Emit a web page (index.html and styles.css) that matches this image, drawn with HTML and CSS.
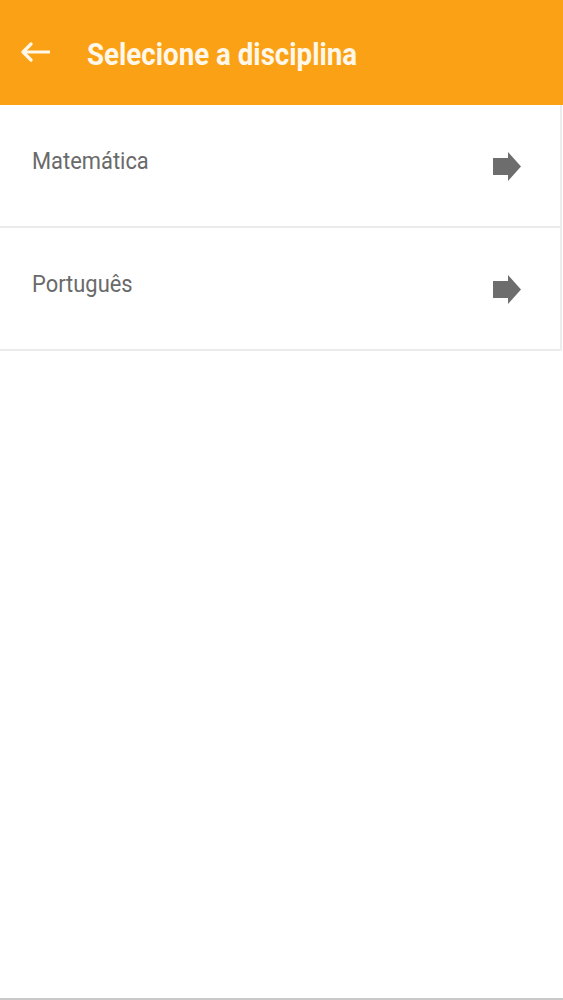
FILE: index.html
```html
<!DOCTYPE html>
<html lang="pt">
<head>
  <meta charset="UTF-8">
  <meta name="viewport" content="width=device-width, initial-scale=1.0">
  <title>Selecione a disciplina</title>
  <link rel="stylesheet" href="styles.css">
</head>
<body>
  <div class="screen">
    <div class="toolbar">
      <span class="back">
        <svg width="30" height="20" viewBox="0 0 30 20">
          <path d="M29 10H3M11 2L3 10l8 8" fill="none" stroke="#fff8ea" stroke-width="3.2" stroke-linecap="round" stroke-linejoin="round"/>
        </svg>
      </span>
      <span class="title">Selecione a disciplina</span>
    </div>

    <div class="list">
      <div class="item">
        <span class="item-text">Matemática</span>
        <svg class="go" width="28" height="29" viewBox="0 0 28 29">
          <path d="M0 6h15V0l13 14.5L15 29v-6H0z" fill="#6d6d6d"/>
        </svg>
      </div>
      <div class="item">
        <span class="item-text">Português</span>
        <svg class="go" width="28" height="29" viewBox="0 0 28 29">
          <path d="M0 6h15V0l13 14.5L15 29v-6H0z" fill="#6d6d6d"/>
        </svg>
      </div>
    </div>

    <div class="spacer"></div>
    <div class="bottom-line"></div>
  </div>
</body>
</html>
```

FILE: styles.css
```css
body {
  margin: 0;
  padding: 0;
  background-color: white;
  font-family: Roboto, "Liberation Sans", Arial, sans-serif;
}

.screen {
  display: flex;
  flex-direction: column;
  height: 1000px;
}

.toolbar {
  display: flex;
  align-items: center;
  height: 105px;
  background-color: #fba115;
  padding-left: 20px;
  box-sizing: border-box;
}

.back {
  display: flex;
  width: 30px;
  margin-right: 37px;
  margin-top: -1px;
}

/* screenshot is a bit taller than wide, so the text is stretched a touch */
.title {
  display: inline-block;
  color: #fff8ea;
  font-size: 27.7px;
  font-weight: bold;
  margin-top: 3px;
  transform: scaleY(1.1);
}

.list {
  border-right: 2px solid #ececec;
  margin-right: 1px;
}

.item {
  display: flex;
  align-items: center;
  justify-content: space-between;
  height: 121px;
  padding: 0 39px 0 32px;
  border-bottom: 2px solid #ebebeb;
}

.item-text {
  display: inline-block;
  color: #6a6a6a;
  font-size: 21.9px;
  margin-top: -11px;
  transform: scaleY(1.08);
}

.go {
  margin-top: 1px;
}

.spacer {
  flex: 1;
}

.bottom-line {
  height: 2px;
  background-color: #c9c9c9;
}
```
